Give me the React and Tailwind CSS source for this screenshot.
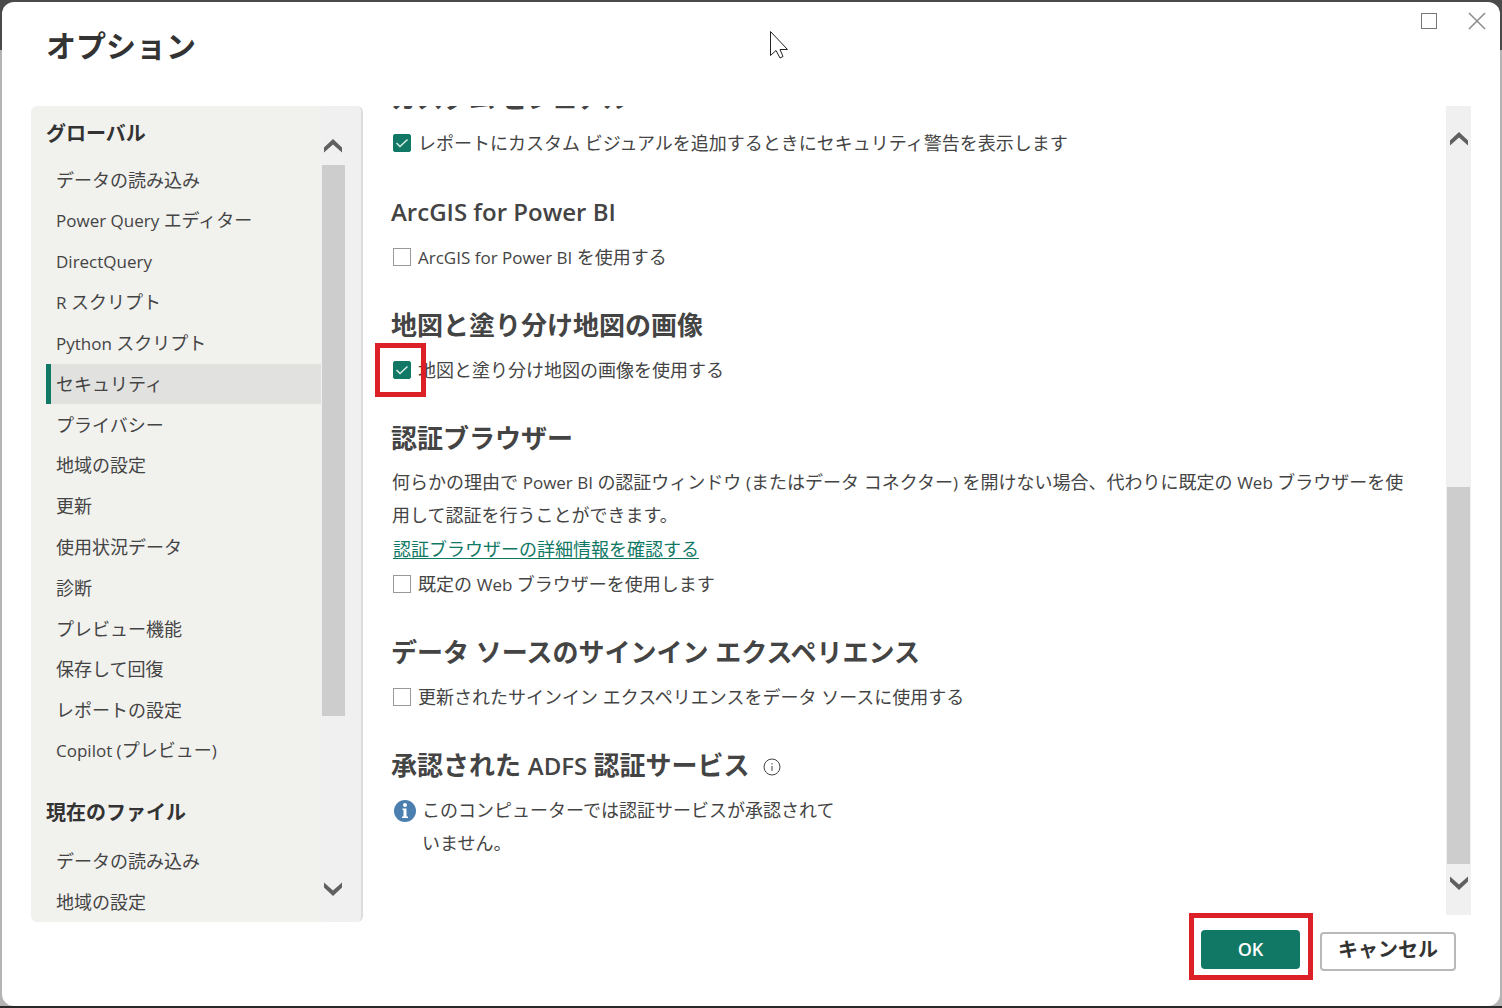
import React, { useState } from "react";

const GLOBAL_ITEMS = [
  "データの読み込み",
  "Power Query エディター",
  "DirectQuery",
  "R スクリプト",
  "Python スクリプト",
  "セキュリティ",
  "プライバシー",
  "地域の設定",
  "更新",
  "使用状況データ",
  "診断",
  "プレビュー機能",
  "保存して回復",
  "レポートの設定",
  "Copilot (プレビュー)",
];

const FILE_ITEMS = ["データの読み込み", "地域の設定"];

export default function App() {
  const [selected, setSelected] = useState("セキュリティ");

  return (
    <div className="h-screen flex flex-col bg-[#b4b4b4] bg-[linear-gradient(#4a4a4a_50px,transparent_50px)] border-b-2 border-[#2a2a2a] font-['Open_Sans','Noto_Sans_CJK_JP',sans-serif] text-[#444444]">
      <div
        role="dialog"
        aria-labelledby="dialog-title"
        className="relative flex-1 min-h-0 flex flex-col mt-0.5 mx-0.5 bg-white rounded-xl"
      >
        <TitleBar />
        <div className="flex-1 min-h-0 flex">
          <Sidebar selected={selected} setSelected={setSelected} />
          <SecurityPage />
        </div>
        <Footer />
        <MousePointer />
      </div>
    </div>
  );
}

function TitleBar() {
  return (
    <header className="h-[104px] shrink-0 flex items-start justify-between pl-11 pr-[13px]">
      <h1
        id="dialog-title"
        className="mt-6 text-[30px] leading-10 font-bold text-[#333333]"
      >
        オプション
      </h1>
      <div className="flex gap-7 mt-[9px]">
        <button type="button" aria-label="最大化">
          <svg width="20" height="20" fill="none" stroke="#777777">
            <rect x="2.5" y="2.5" width="15" height="15" />
          </svg>
        </button>
        <button type="button" aria-label="閉じる">
          <svg width="20" height="20" fill="none" stroke="#8a8a8a" strokeWidth="1.5">
            <path d="M2 2l16 16M18 2L2 18" />
          </svg>
        </button>
      </div>
    </header>
  );
}

function Sidebar({ selected, setSelected }) {
  return (
    <nav className="w-[332px] shrink-0 ml-[29px] flex bg-[#f1f1ee] border-r-2 border-[#dddddd] rounded-md overflow-hidden">
      <div className="flex-1 pl-[15px] overflow-hidden">
        <h2 className="pt-3 h-[54px] text-xl leading-8 font-bold text-[#333333]">
          グローバル
        </h2>
        <ul className="h-[611px] flex flex-col justify-between">
          {GLOBAL_ITEMS.map((item) => (
            <NavItem
              key={item}
              label={item}
              active={item === selected}
              onClick={() => setSelected(item)}
            />
          ))}
        </ul>
        <h2 className="pt-[26px] h-[70px] text-xl leading-8 font-bold text-[#333333]">
          現在のファイル
        </h2>
        <ul className="flex flex-col gap-px">
          {FILE_ITEMS.map((item) => (
            <NavItem key={item} label={item} />
          ))}
        </ul>
      </div>
      <div className="w-10 pr-4 pt-2 bg-[#f0f0f0] flex flex-col">
        <div className="h-[51px] flex items-center justify-center pt-3">
          <Chevron up />
        </div>
        <div className="h-[551px] ml-px bg-[#cdcdcd]" />
        <div className="flex-1 flex items-end justify-center pb-[26px]">
          <Chevron />
        </div>
      </div>
    </nav>
  );
}

function NavItem({ label, active, onClick }) {
  return (
    <li>
      <button
        type="button"
        onClick={onClick}
        className={`w-full h-10 border-l-[5px] pl-[5px] text-left text-lg leading-8 ${
          active ? "bg-[#e1e1e0] border-[#117865]" : "border-transparent"
        }`}
      >
        <Mixed text={label} />
      </button>
    </li>
  );
}

function SecurityPage() {
  return (
    <main className="flex-1 min-w-0 ml-2 pl-5 mr-[29px] mb-[7px] flex overflow-hidden">
      <div className="flex-1 min-w-0 pr-8">
        <div className="-mt-6 flex flex-col gap-[35px]">
          <Section title="カスタム ビジュアル">
            <Check
              checked
              label="レポートにカスタム ビジュアルを追加するときにセキュリティ警告を表示します"
            />
          </Section>

          <Section title="ArcGIS for Power BI">
            <Check label="ArcGIS for Power BI を使用する" />
          </Section>

          <Section title="地図と塗り分け地図の画像">
            <Check checked highlight label="地図と塗り分け地図の画像を使用する" />
          </Section>

          <Section title="認証ブラウザー">
            <p className="pl-px text-lg leading-8">
              <Mixed text="何らかの理由で Power BI の認証ウィンドウ (またはデータ コネクター) を開けない場合、代わりに既定の Web ブラウザーを使用して認証を行うことができます。" />
            </p>
            <div className="h-9 pl-0.5 text-lg leading-9">
              <a href="#auth" className="text-[#117865] underline underline-offset-2">
                認証ブラウザーの詳細情報を確認する
              </a>
            </div>
            <Check label="既定の Web ブラウザーを使用します" />
          </Section>

          <Section title="データ ソースのサインイン エクスペリエンス">
            <Check label="更新されたサインイン エクスペリエンスをデータ ソースに使用する" />
          </Section>

          <Section title="承認された ADFS 認証サービス" info>
            <div className="flex gap-[6px] pl-[3px]">
              <svg width="22" height="22" viewBox="0 0 22 22" className="mt-1.5 shrink-0">
                <circle cx="11" cy="11" r="11" fill="#4a7fb0" />
                <circle cx="11" cy="5" r="2" fill="#fff" />
                <path d="M8.5 8.5h4v8h1.5v1.5h-6v-1.5h1.5V10h-1z" fill="#fff" />
              </svg>
              <p className="w-[425px] text-lg leading-[33px]">
                このコンピューターでは認証サービスが承認されていません。
              </p>
            </div>
          </Section>
        </div>
      </div>
      <div className="w-[25px] px-px bg-[#f0f0f0] flex flex-col">
        <div className="h-[381px] flex justify-center pt-[26px]">
          <Chevron up />
        </div>
        <div className="h-[377px] bg-[#cdcdcd]" />
        <div className="flex-1 flex justify-center pt-3">
          <Chevron />
        </div>
      </div>
    </main>
  );
}

function Section({ title, info, children }) {
  return (
    <section>
      <div className="flex items-center gap-[14px] mb-3">
        <h3 className="text-[26px] leading-8 font-bold whitespace-nowrap">
          <Mixed text={title} heading />
        </h3>
        {info && (
          <svg width="18" height="18" fill="none" stroke="#444444" className="mt-0.5">
            <circle cx="9" cy="9" r="8" />
            <path d="M9 8v5M9 5v1.5" />
          </svg>
        )}
      </div>
      {children}
    </section>
  );
}

function Check({ label, checked, highlight }) {
  return (
    <label className="relative w-fit h-[34px] pl-0.5 flex items-center gap-[7px] text-lg leading-8">
      <span className="relative size-[18px] shrink-0">
        <input
          type="checkbox"
          defaultChecked={checked}
          className="peer block appearance-none size-[18px] border border-[#999999] bg-white checked:bg-[#117865] checked:border-[#117865] checked:rounded-xs"
        />
        <svg
          viewBox="0 0 18 18"
          fill="none"
          stroke="#d8efe8"
          strokeWidth="1.5"
          className="absolute inset-0 hidden peer-checked:block"
        >
          <path d="M3.5 9l3.500 3.500L14.500 5.500" />
        </svg>
      </span>
      <span>
        <Mixed text={label} />
      </span>
      {highlight && (
        <span className="absolute -left-4 -top-[10px] w-[51px] h-[54px] border-[5px] border-[#dc2028]" />
      )}
    </label>
  );
}

// Latin runs are set a step smaller so they sit evenly beside the kana
function Mixed({ text, heading }) {
  return text.split(/([A-Za-z()][A-Za-z() ]*)/).map((part, index) =>
    index % 2 === 1 ? (
      <span
        key={index}
        className={heading ? "text-2xl leading-8 font-semibold" : "text-[17px]"}
      >
        {part}
      </span>
    ) : (
      part
    )
  );
}

function Chevron({ up }) {
  return (
    <svg
      width="18"
      height="14"
      viewBox="0 0 18 14"
      fill="#606060"
      className={up ? "rotate-180" : ""}
    >
      <path d="M0 0.5L9 8.5L18 0.5V5.5L9 14L0 5.5z" />
    </svg>
  );
}

function Footer() {
  return (
    <footer className="h-[84px] shrink-0 flex items-start justify-end gap-5 pt-2 pr-11">
      <div className="relative">
        <button
          type="button"
          className="block w-[99px] h-[39px] pb-0.5 rounded-sm bg-[#117865] text-white text-lg font-semibold"
        >
          OK
        </button>
        <span className="absolute -left-3 -top-[17px] w-[124px] h-[67px] border-[5px] border-[#dc2028] pointer-events-none" />
      </div>
      <button
        type="button"
        className="mt-0.5 w-[136px] h-[39px] pb-1 rounded-sm border-2 border-[#b9b9b9] bg-white text-xl leading-8 font-bold text-[#333333]"
      >
        キャンセル
      </button>
    </footer>
  );
}

function MousePointer() {
  return (
    <svg
      width="20"
      height="30"
      fill="#fff"
      stroke="#222222"
      className="absolute top-7 left-[767px] pointer-events-none"
    >
      <path d="M1.5 1.5v24l5.500-5 4 7.500 3-1.500-3-7h7.500z" />
    </svg>
  );
}
